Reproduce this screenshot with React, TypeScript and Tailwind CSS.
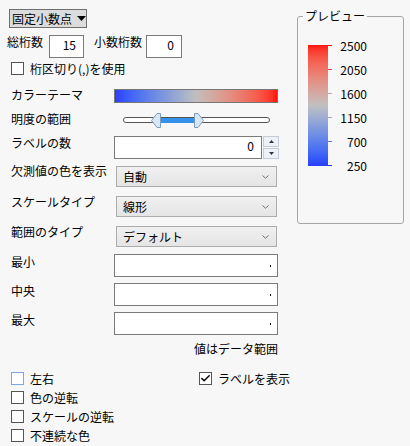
import { Check } from 'lucide-react';

const ticks = [
  { v: '2500', c: 'bg-[#ff1010]' },
  { v: '2050', c: 'bg-[#e24646]' },
  { v: '1600', c: 'bg-[#cda0a0]' },
  { v: '1150', c: 'bg-[#a0a6cc]' },
  { v: '700', c: 'bg-[#6470e6]' },
  { v: '250', c: 'bg-[#2a3cff]' },
];

function Chevron() {
  return (
    <svg width="7" height="4" viewBox="0 0 7 4" className="shrink-0">
      <path d="M0.5 0.5 L3.5 3.2 L6.5 0.5" fill="none" stroke="#707070" strokeWidth="1" />
    </svg>
  );
}

function Select({ value }: { value: string }) {
  return (
    <div className="ml-[2px] flex h-[21px] w-[161px] items-center justify-between border border-[#acacac] bg-linear-to-b from-[#f0f0f0] to-[#e5e5e5] pl-[6px] pr-[7px]">
      <span className="leading-[16px]">{value}</span>
      <Chevron />
    </div>
  );
}

function TextBox({ value, dot, w }: { value?: string; dot?: boolean; w: string }) {
  return (
    <div className={`relative h-[23px] ${w} border border-[#7a7a7a] bg-white`}>
      {value && (
        <span className="absolute right-[7px] top-[1px] leading-[16px]">{value}</span>
      )}
      {dot && <span className="absolute right-[6px] top-[10px] h-[1.5px] w-[1.5px] bg-black" />}
    </div>
  );
}

function Box({ checked, focus }: { checked?: boolean; focus?: boolean }) {
  return (
    <span
      className={`flex h-[13px] w-[13px] shrink-0 items-center justify-center border bg-white ${
        focus ? 'border-[#7ea6e6]' : 'border-[#555555]'
      }`}
    >
      {checked && <Check size={11} strokeWidth={3.2} className="text-black" />}
    </span>
  );
}

function CheckRow({ label, checked, focus }: { label: string; checked?: boolean; focus?: boolean }) {
  return (
    <div className="flex items-center gap-[6px]">
      <Box checked={checked} focus={focus} />
      <span className="leading-[16px]">{label}</span>
    </div>
  );
}

function Row({
  label,
  children,
  mt,
  lt,
}: {
  label: string;
  children: React.ReactNode;
  mt: string;
  lt: string;
}) {
  return (
    <div className={`flex items-start ${mt}`}>
      <span className={`w-[103px] shrink-0 pl-[11px] leading-[14px] ${lt}`}>{label}</span>
      {children}
    </div>
  );
}

function Slider() {
  return (
    <div className="relative ml-[9px] h-[15px] w-[147px]">
      <div className="absolute left-0 right-0 top-[4px] h-[6px] rounded-full border border-[#555555] bg-white" />
      <div className="absolute left-[37px] top-[5px] h-[5px] w-[35px] bg-[#3592ea]" />
      <svg className="absolute left-[28px] top-0" width="10" height="15" viewBox="0 0 10 15">
        <path d="M0.5 7.5 L6 0.5 L9.5 0.5 L9.5 14.5 L6 14.5 Z" fill="#d8e6f6" stroke="#7d9cc2" />
      </svg>
      <svg className="absolute left-[71px] top-0" width="10" height="15" viewBox="0 0 10 15">
        <path d="M9.5 7.5 L4 0.5 L0.5 0.5 L0.5 14.5 L4 14.5 Z" fill="#d8e6f6" stroke="#7d9cc2" />
      </svg>
    </div>
  );
}

export default function App() {
  return (
    <div className="flex h-[446px] w-[410px] overflow-hidden whitespace-nowrap bg-[#f7f7f7] font-['Noto_Sans_CJK_JP',sans-serif] text-[12px] text-black">
      {/* left settings column */}
      <div className="flex w-[290px] shrink-0 flex-col">
        <div className="ml-[9px] mt-[9px] flex h-[19px] w-[78px] items-center gap-[5px] border border-[#6f6f6f] bg-[#dcdcdc] pl-[2px]">
          <span className="leading-[16px]">固定小数点</span>
          <svg width="9" height="5" viewBox="0 0 9 5">
            <path d="M0 0 L9 0 L4.5 5 Z" fill="#000" />
          </svg>
        </div>

        <div className="ml-[7px] mt-[7px] flex h-[23px] items-start">
          <span className="mt-[-1px] leading-[16px]">総桁数</span>
          <div className="ml-[6px]">
            <TextBox value="15" w="w-[35px]" />
          </div>
          <span className="ml-[10px] mt-[-1px] leading-[16px]">小数桁数</span>
          <div className="ml-[4px]">
            <TextBox value="0" w="w-[36px]" />
          </div>
        </div>

        <div className="ml-[11px] mt-[3px] flex h-[15px] items-center">
          <CheckRow label="桁区切り(,)を使用" />
        </div>

        <div className="mt-[13px] flex h-[14px] items-center">
          <span className="mb-[2px] w-[114px] shrink-0 pl-[11px] leading-[16px]">カラーテーマ</span>
          <div className="h-[14px] w-[164px] shrink-0 border border-[#777777] bg-linear-to-r from-[#2f3dff] via-[#bfbfbf] to-[#ff0f0f]" />
        </div>

        <div className="mt-[10px] flex h-[15px] items-center">
          <span className="mb-[4px] w-[114px] shrink-0 pl-[11px] leading-[16px]">明度の範囲</span>
          <Slider />
        </div>

        <Row label="ラベルの数" mt="mt-[8px]" lt="mt-0">
          <div className="ml-[11px] flex">
            <TextBox value="0" w="w-[148px]" />
            <div className="ml-[1px] flex h-[23px] w-[16px] flex-col gap-[1px]">
              <div className="flex flex-1 items-center justify-center border border-[#c3ccd8] bg-[#edf2f8]">
                <svg width="5" height="3" viewBox="0 0 5 3"><path d="M0 3 L2.5 0 L5 3 Z" fill="#333" /></svg>
              </div>
              <div className="flex flex-1 items-center justify-center border border-[#c3ccd8] bg-[#edf2f8]">
                <svg width="5" height="3" viewBox="0 0 5 3"><path d="M0 0 L5 0 L2.5 3 Z" fill="#333" /></svg>
              </div>
            </div>
          </div>
        </Row>

        <Row label="欠測値の色を表示" mt="mt-[7px]" lt="mt-[-2px]">
          <div className="ml-[11px]">
            <Select value="自動" />
          </div>
        </Row>
        <Row label="スケールタイプ" mt="mt-[9px]" lt="mt-[-1px]">
          <div className="ml-[11px]">
            <Select value="線形" />
          </div>
        </Row>
        <Row label="範囲のタイプ" mt="mt-[9px]" lt="mt-[-1px]">
          <div className="ml-[11px]">
            <Select value="デフォルト" />
          </div>
        </Row>

        <Row label="最小" mt="mt-[7px]" lt="mt-[1px]">
          <div className="ml-[11px]">
            <TextBox dot w="w-[164px]" />
          </div>
        </Row>
        <Row label="中央" mt="mt-[6px]" lt="mt-[1px]">
          <div className="ml-[11px]">
            <TextBox dot w="w-[164px]" />
          </div>
        </Row>
        <Row label="最大" mt="mt-[6px]" lt="mt-[1px]">
          <div className="ml-[11px]">
            <TextBox dot w="w-[164px]" />
          </div>
        </Row>

        <div className="mt-[6px] flex h-[16px] w-[278px] justify-end">
          <span className="leading-[16px]">値はデータ範囲</span>
        </div>

        <div className="ml-[11px] mt-[12px] flex flex-col">
          <div className="flex h-[19px] items-center">
            <div className="w-[194px]">
              <CheckRow label="左右" focus />
            </div>
            <CheckRow label="ラベルを表示" checked />
          </div>
          <div className="flex h-[19px] items-center">
            <CheckRow label="色の逆転" />
          </div>
          <div className="flex h-[19px] items-center">
            <CheckRow label="スケールの逆転" />
          </div>
          <div className="flex h-[19px] items-center">
            <CheckRow label="不連続な色" />
          </div>
        </div>
      </div>

      {/* preview group box */}
      <div className="relative ml-[7px] mt-[16px] h-[208px] w-[107px] rounded-[3px] border border-[#a5a5a5]">
        <span className="absolute left-[5px] top-[-9px] bg-[#f7f7f7] px-[2px] leading-[16px]">プレビュー</span>
        <div className="ml-[10px] mt-[28px] flex">
          <div className="h-[121px] w-[20px] bg-linear-to-t from-[#2a3cff] via-[#c0c0c0] to-[#ff1010]" />
          <div className="flex h-[121px] flex-col justify-between py-[0.5px]">
            {ticks.map((t) => (
              <div key={t.v} className="flex h-0 items-center">
                <span className={`h-[1px] w-[4px] ${t.c}`} />
                <span className="w-[35px] text-right leading-[16px]">{t.v}</span>
              </div>
            ))}
          </div>
        </div>
      </div>
    </div>
  );
}
